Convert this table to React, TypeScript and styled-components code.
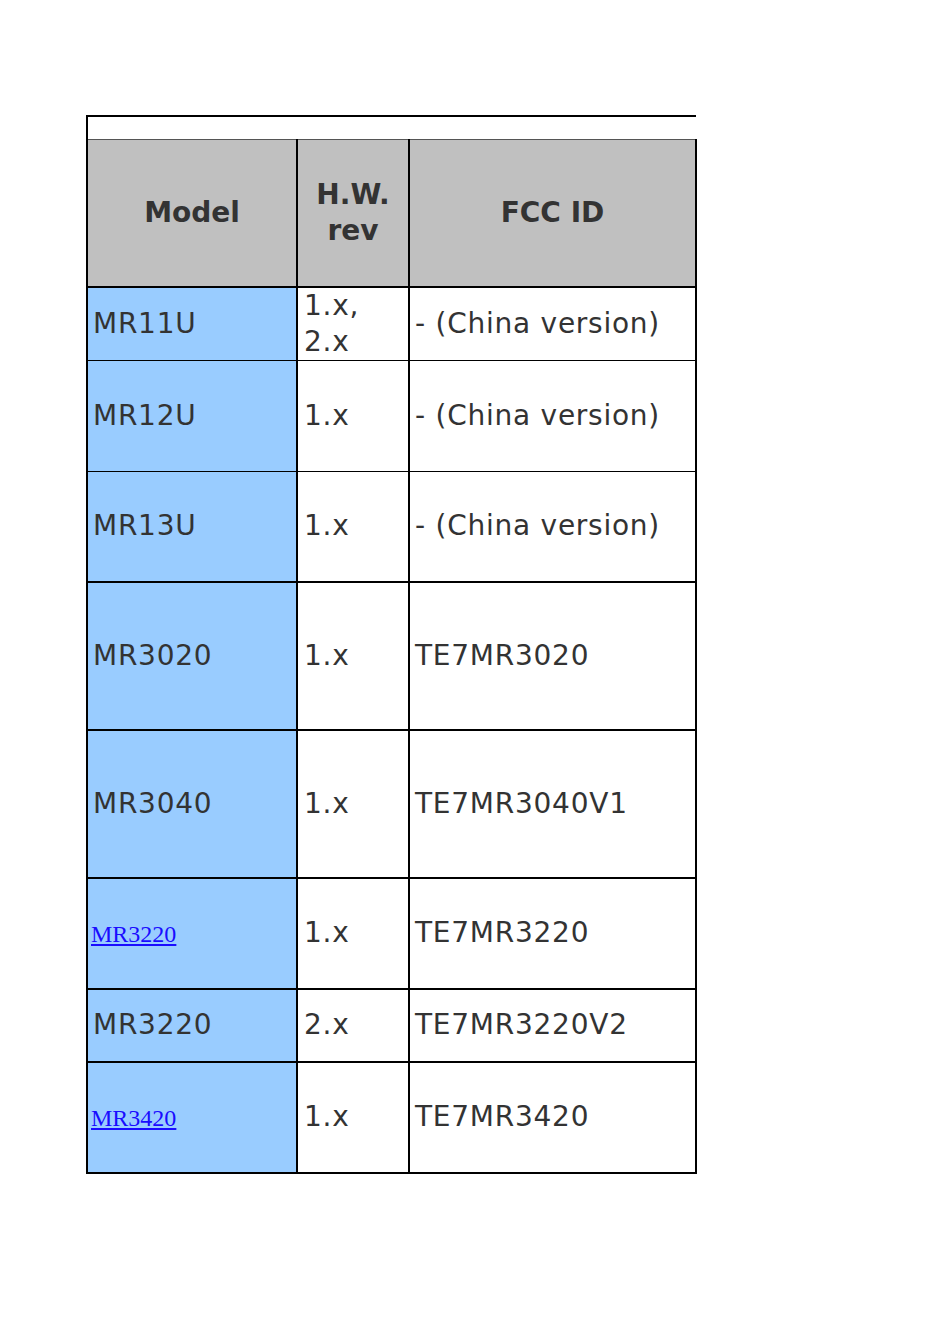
import styled, { createGlobalStyle } from "styled-components";

const GlobalStyle = createGlobalStyle`
  html, body {
    margin: 0;
    padding: 0;
    background: #ffffff;
  }
  body {
    font-family: "DejaVu Sans", Verdana, sans-serif;
  }
`;

const Page = styled.div`
  padding: 115px 0 0 86px;
  min-height: 1344px;
  box-sizing: border-box;
`;

const Frame = styled.div`
  width: 610px;
`;

const TopStrip = styled.div`
  height: 22px;
  border-top: 2px solid #000;
  border-left: 2px solid #000;
`;

const Table = styled.table`
  width: 609px;
  border-collapse: collapse;
  table-layout: fixed;
  color: #333333;
  font-family: "DejaVu Sans", Verdana, sans-serif;
  font-size: 28px;
  letter-spacing: 0.75px;
  line-height: 36px;
`;

const Row = styled.tr<{ $h: number }>`
  height: ${(p) => p.$h}px;
`;

const HeadCell = styled.th<{ $right?: number }>`
  background: #c0c0c0;
  font-weight: bold;
  text-align: center;
  vertical-align: middle;
  padding: 0 4px;
  border-top: 1px solid #555;
  border-bottom: 2px solid #000;
  border-left: 2px solid #000;
  border-right: ${(p) => p.$right ?? 1}px solid #000;
  letter-spacing: 0;
`;

const Cell = styled.td<{ $blue?: boolean; $bottom?: number; $right?: number }>`
  background: ${(p) => (p.$blue ? "#99ccff" : "#ffffff")};
  vertical-align: middle;
  padding: 0 4px 0 5px;
  border-left: 2px solid #000;
  border-right: ${(p) => p.$right ?? 1}px solid #000;
  border-bottom: ${(p) => p.$bottom ?? 2}px solid #000;
  white-space: nowrap;
`;

const WrapCell = styled(Cell)`
  white-space: normal;
  padding-left: 6px;
`;

const ModelLink = styled.a`
  font-family: "Liberation Serif", "Times New Roman", serif;
  font-size: 24px;
  letter-spacing: 0;
  color: #1a0dff;
  text-decoration: underline;
  margin-left: -2px;
`;

type Item = {
  model: string;
  link?: boolean;
  rev: string;
  fcc: string;
  h: number;
  bottom?: number;
};

const rows: Item[] = [
  { model: "MR11U", rev: "1.x, 2.x", fcc: "- (China version)", h: 74, bottom: 1 },
  { model: "MR12U", rev: "1.x", fcc: "- (China version)", h: 111, bottom: 1 },
  { model: "MR13U", rev: "1.x", fcc: "- (China version)", h: 110 },
  { model: "MR3020", rev: "1.x", fcc: "TE7MR3020", h: 148 },
  { model: "MR3040", rev: "1.x", fcc: "TE7MR3040V1", h: 148 },
  { model: "MR3220", link: true, rev: "1.x", fcc: "TE7MR3220", h: 111 },
  { model: "MR3220", rev: "2.x", fcc: "TE7MR3220V2", h: 73 },
  { model: "MR3420", link: true, rev: "1.x", fcc: "TE7MR3420", h: 111 },
];

export default function App() {
  return (
    <Page>
      <GlobalStyle />
      <Frame>
        <TopStrip />
        <Table>
          <colgroup>
            <col style={{ width: 210 }} />
            <col style={{ width: 112 }} />
            <col style={{ width: 287 }} />
          </colgroup>
          <thead>
            <Row $h={147}>
              <HeadCell>Model</HeadCell>
              <HeadCell>
                H.W.
                <br />
                rev
              </HeadCell>
              <HeadCell $right={2}>FCC ID</HeadCell>
            </Row>
          </thead>
          <tbody>
            {rows.map((r, i) => (
              <Row $h={r.h} key={i}>
                <Cell $blue $bottom={r.bottom}>
                  {r.link ? <ModelLink href="#">{r.model}</ModelLink> : r.model}
                </Cell>
                <WrapCell $bottom={r.bottom}>{r.rev}</WrapCell>
                <Cell $bottom={r.bottom} $right={2}>
                  {r.fcc}
                </Cell>
              </Row>
            ))}
          </tbody>
        </Table>
      </Frame>
    </Page>
  );
}
